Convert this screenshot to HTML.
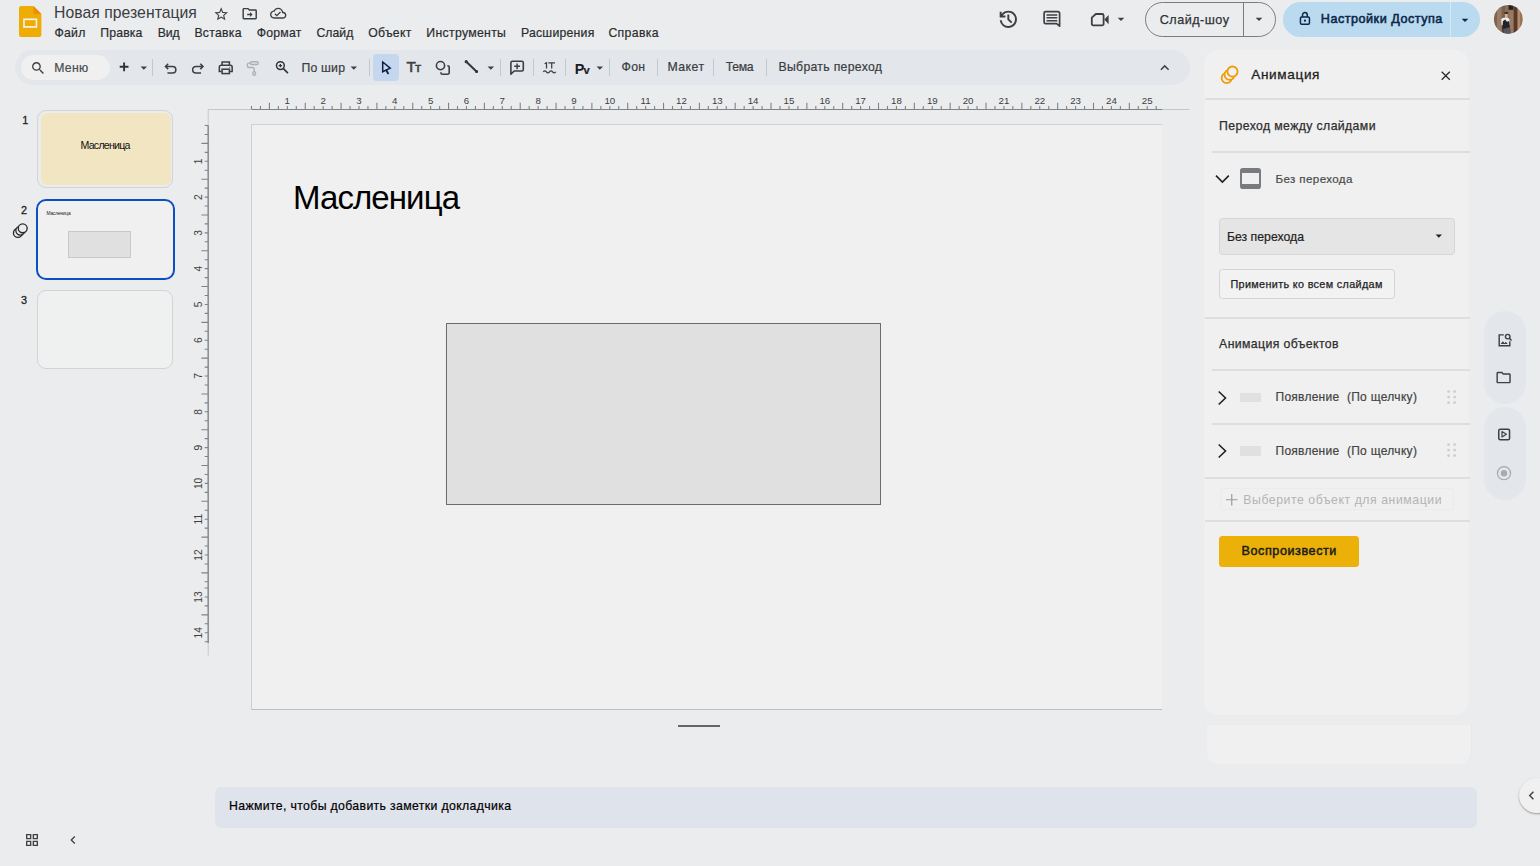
<!DOCTYPE html>
<html lang="ru">
<head>
<meta charset="utf-8">
<title>Новая презентация</title>
<style>
html,body{margin:0;padding:0}
body{width:1540px;height:866px;overflow:hidden;background:#ebecee;position:relative;font-family:"Liberation Sans",sans-serif;}
.a{position:absolute}
.t{position:absolute;white-space:pre;line-height:1;margin:0;padding:0}
svg{position:absolute;overflow:visible}
.sep{position:absolute;width:1px;background:#c4c7cc;top:59px;height:17px}
.hl{position:absolute;height:2px;background:#dedede}
#toolbar{left:15px;top:50px;width:1175px;height:35px;border-radius:18px;background:#e3e6eb}
#search{left:21px;top:55px;width:89px;height:25px;border-radius:13px;background:#f0f0f0}
#selbtn{left:373.100px;top:54.400px;width:26.400px;height:26.600px;border-radius:4px;background:#c5d6ef}
#panel{left:1204.400px;top:50px;width:265.100px;height:664.600px;border-radius:14px;background:#f0f0f0}
#panel2{left:1206.600px;top:725px;width:264.400px;height:39px;border-radius:0 0 12px 12px;background:#f0f0f0;border-right:1px solid #e6e9ec}
#slide{left:251px;top:124px;height:583.700px;background:#f0f0f0;border:1px solid #cfd0d0;border-right:0;border-bottom-color:#bcbebe;width:909.800px}
#shape{left:446px;top:323px;width:433px;height:180px;background:#e0e0e0;border:1px solid #6c6c6c}
#notes{left:215px;top:786.500px;width:1262px;height:41.700px;border-radius:6px;background:#dfe3ec}
.rail{left:1484px;width:42px;height:93px;border-radius:21px;background:#e3e6eb}
</style>
</head>
<body>
<!-- header -->
<svg style="left:18.600px;top:5.800px" width="22.400" height="31" viewBox="0 0 22.6 31" preserveAspectRatio="none">
<path d="M2.2 0H14.6L22.6 8V28.8a2.2 2.2 0 0 1-2.2 2.2H2.200A2.200 2.200 0 0 1 0 28.800V2.200A2.200 2.200 0 0 1 2.200 0z" fill="#efac05"/>
<path d="M14.6 0L22.6 8H16.2a1.600 1.600 0 0 1-1.600-1.600z" fill="#e98f07"/>
<rect x="5" y="13.3" width="12.6" height="7.6" fill="none" stroke="#f3f1ea" stroke-width="1.7"/>
</svg>
<svg style="left:212.80px;top:5.50px" width="16.4" height="16.4" viewBox="0 0 24 24"><path  fill="#3c4043" d="M22 9.24l-7.19-.62L12 2 9.19 8.63 2 9.24l5.46 4.73L5.82 21 12 17.27 18.18 21l-1.63-7.03L22 9.24zM12 15.4l-3.76 2.27 1-4.28-3.32-2.88 4.38-.38L12 6.1l1.71 4.04 4.38.38-3.32 2.88 1 4.28L12 15.4z"/></svg>
<svg style="left:240.70px;top:4.70px" width="17.4" height="17.4" viewBox="0 0 24 24"><path  fill="#3c4043" d="M20 6h-8l-2-2H4c-1.100 0-2 .9-2 2v12c0 1.100.9 2 2 2h16c1.100 0 2-.9 2-2V8c0-1.100-.9-2-2-2zm0 12H4V6h5.170l2 2H20v10zm-7.500-1.500l3.500-3.500-3.500-3.500v2.500H8.500v2h4v2.500z"/></svg>
<svg style="left:269.60px;top:5.20px" width="16.4" height="16.4" viewBox="0 0 24 24"><path  fill="#3c4043" d="M19.35 10.04C18.67 6.59 15.64 4 12 4 9.11 4 6.6 5.64 5.35 8.04 2.34 8.36 0 10.91 0 14c0 3.31 2.69 6 6 6h13c2.76 0 5-2.24 5-5 0-2.64-2.05-4.78-4.65-4.96zM19 18H6c-2.21 0-4-1.79-4-4 0-2.05 1.53-3.76 3.56-3.97l1.07-.11.5-.95C8.08 7.14 9.94 6 12 6c2.62 0 4.88 1.86 5.39 4.43l.3 1.5 1.53.11c1.56.1 2.78 1.41 2.78 2.96 0 1.65-1.35 3-3 3zm-9-3.82l-2.09-2.09L6.5 13.5 10 17l6.01-6.01-1.41-1.41z"/></svg>
<svg style="left:990px;top:4px" width="140" height="30" viewBox="990 4 140 30" fill="none" stroke="#3c4043" stroke-width="1.700">
<path transform="translate(996.800 7.800) scale(.96)" fill="#3c4043" stroke="none" d="M12 21q-3.450 0-6.012-2.287T3.050 13H5.100q.35 2.600 2.313 4.300T12 19q2.925 0 4.963-2.037T19 12t-2.037-4.963T12 5q-1.725 0-3.225.8T6.250 8H9v2H3V4h2v2.350q1.275-1.600 3.113-2.475T12 3q1.875 0 3.513.713t2.850 1.924 1.925 2.850T21 12t-.712 3.513-1.925 2.850-2.850 1.925T12 21m2.800-4.800L11 12.400V7h2v4.600l3.200 3.200z"/>
<path d="M1044.100 13.200a1.500 1.500 0 0 1 1.500-1.500h12.500a1.500 1.500 0 0 1 1.500 1.500v13l-3-2.500h-11a1.500 1.500 0 0 1-1.500-1.500z" stroke-linejoin="round"/><path d="M1046.500 14.900h10.800M1046.500 17.800h10.800M1046.500 20.800h10.800" stroke-width="1.500"/>
<path d="M1095.800 14h6.300a1.500 1.500 0 0 1 1.500 1.500v8.400a1.500 1.500 0 0 1-1.500 1.500h-8.800a1.500 1.500 0 0 1-1.500-1.500v-6.200z" stroke-width="1.800" stroke-linejoin="round"/><path d="M1104.300 19.600l4.300-4.700v9.400z" fill="#3c4043" stroke="none"/>
</svg>
<svg style="left:1113.00px;top:11.00px" width="16" height="16" viewBox="0 0 24 24"><path  fill="#3c4043" d="M7 10l5 5 5-5z"/></svg>
<div class="a" style="left:1144.5px;top:1.5px;width:129px;height:33px;border:1px solid #7a7d80;border-radius:18px"></div>
<div class="a" style="left:1243px;top:2px;width:1px;height:34px;background:#7a7d80"></div>
<svg style="left:1251.00px;top:11.00px" width="16" height="16" viewBox="0 0 24 24"><path  fill="#3c4043" d="M7 10l5 5 5-5z"/></svg>
<div class="a" style="left:1282.5px;top:1.5px;width:197px;height:35px;border-radius:18px;background:#badaf0"></div>
<div class="a" style="left:1450px;top:1.5px;width:1px;height:35px;background:#d6e8f5"></div>
<svg style="left:1296px;top:9px" width="18" height="18" viewBox="1296 9 18 18" fill="none" stroke="#0c2748" stroke-width="1.500"><rect x="1300.450" y="16.950" width="9" height="7.400" rx="1.300"/><path d="M1302.550 17V14.900a2.350 2.350 0 0 1 4.700 0V17"/><circle cx="1304.950" cy="20.700" r="1.150" fill="#0c2748" stroke="none"/></svg>
<svg style="left:1457.00px;top:11.60px" width="16" height="16" viewBox="0 0 24 24"><path  fill="#0c2748" d="M7 10l5 5 5-5z"/></svg>
<svg style="left:1493px;top:4px" width="31" height="31" viewBox="-1 -.5 31 31"><defs><clipPath id="av"><circle cx="14.300" cy="14.800" r="14.400"/></clipPath><filter id="bl" x="-10%" y="-10%" width="120%" height="120%"><feGaussianBlur stdDeviation=".55"/></filter></defs>
<circle cx="14.300" cy="14.800" r="15" fill="#f3f3f4"/>
<g clip-path="url(#av)"><g filter="url(#bl)"><rect x="-2" y="-2" width="34" height="34" fill="#8d6e59"/>
<rect x="-2" y="-2" width="8" height="34" fill="#80624f"/><rect x="3" y="4" width="4" height="22" fill="#9b7d66"/><rect x="8" y="-2" width="3" height="34" fill="#7c5e4c"/><rect x="15.500" y="6" width="4" height="26" fill="#9a7a62"/>
<rect x="19.700" y="-2" width="3.900" height="34" fill="#5c392c"/><rect x="23.600" y="-2" width="3" height="34" fill="#b08f6c"/><rect x="26.300" y="-2" width="5" height="34" fill="#94704f"/>
<rect x="14.600" y="-2" width="4.600" height="7.300" fill="#25211f"/>
<rect x="10.900" y="8.800" width="2.700" height="5" fill="#d9b08d"/><ellipse cx="12.300" cy="8.500" rx="2.100" ry="1.100" fill="#2a2a2c"/>
<path d="M7.300 14.800q.3-1.600 2.500-1.600h3.400q1.800 0 2.100 1.600l.7 6h-8.500z" fill="#eeeef2"/>
<path d="M9 16.400l2.300-1.400 1.600 2.200 2.300-.7.900 7 .3 6.500h-7.600l-.5-7z" fill="#24242a"/><path d="M9.200 24.500l6.700-2 .5 6.300h-6.900z" fill="#58585c"/></g></g></svg>
<!-- toolbar -->
<div id="toolbar" class="a"></div>
<div id="search" class="a"></div>
<div id="selbtn" class="a"></div>
<svg style="left:30.15px;top:59.85px" width="16.3" height="16.3" viewBox="0 0 24 24"><path  fill="#3c4043" d="M15.5 14h-.79l-.28-.27C15.41 12.59 16 11.11 16 9.5 16 5.91 13.09 3 9.5 3S3 5.91 3 9.5 5.91 16 9.5 16c1.61 0 3.09-.59 4.23-1.57l.27.28v.79l5 4.99L20.49 19l-4.99-5zm-6 0C7.01 14 5 11.99 5 9.5S7.01 5 9.5 5 14 7.01 14 9.5 11.99 14 9.5 14z"/></svg>
<svg style="left:118px;top:61px" width="12" height="12" viewBox="118 61 12 12" stroke="#303336" stroke-width="1.900" fill="none"><path d="M124.100 62.400v8.800M119.700 66.800h8.800"/></svg>
<svg style="left:136.20px;top:59.60px" width="15.6" height="15.6" viewBox="0 0 24 24"><path  fill="#3c4043" d="M7 10l5 5 5-5z"/></svg>
<div class="sep" style="left:152.0px"></div>
<div class="sep" style="left:368.9px"></div>
<div class="sep" style="left:499.6px"></div>
<div class="sep" style="left:533.4px"></div>
<div class="sep" style="left:564.5px"></div>
<div class="sep" style="left:608.9px"></div>
<div class="sep" style="left:656.7px"></div>
<div class="sep" style="left:713.0px"></div>
<div class="sep" style="left:765.8px"></div>
<svg style="left:161.500px;top:58.750px" width="17.500" height="17.500" viewBox="0 0 24 24" fill="none" stroke="#3c4043" stroke-width="2.100"><path d="M8.500 6.500L4.800 10.200l3.700 3.700"/><path d="M5.200 10.200h9.300a4.500 4.500 0 0 1 0 9H7.500"/></svg>
<svg style="left:188.500px;top:58.750px" width="17.500" height="17.500" viewBox="0 0 24 24" fill="none" stroke="#3c4043" stroke-width="2.100"><path d="M15.500 6.500l3.700 3.700-3.700 3.700"/><path d="M18.800 10.200H9.500a4.500 4.500 0 0 0 0 9h7"/></svg>
<svg style="left:217.250px;top:59px" width="17.500" height="17.500" viewBox="0 0 24 24" fill="none" stroke="#3c4043" stroke-width="2.100"><path d="M7 8.500V4.200h10V8.500"/><path d="M6.500 17H3.200v-6a2.500 2.500 0 0 1 2.500-2.500h12.600a2.500 2.500 0 0 1 2.500 2.500v6H17.500"/><rect x="7" y="14" width="10" height="6"/><circle cx="17.500" cy="11.700" r=".7" fill="#3c4043" stroke="none"/></svg>
<svg style="left:244px;top:57px" width="48" height="22" viewBox="244 57 48 22" fill="none" stroke="#aeb0b4" stroke-width="1.400"><rect x="250.500" y="61.800" width="7.700" height="2.700" rx="1.300"/><path d="M250.500 63.100h-1.600a1.500 1.500 0 0 0-1.500 1.500v1.400a1.500 1.500 0 0 0 1.500 1.500h3.800a1.500 1.500 0 0 1 1.500 1.500v2"/><rect x="252.900" y="71.600" width="2.600" height="3.600" rx="1.300"/>
<g stroke="#33363a"><circle cx="280.400" cy="65.600" r="3.900" stroke-width="1.500"/><path d="M283.400 68.600l4.500 4.600" stroke-width="1.700"/><path d="M280.400 63.900v3.400M278.700 65.600h3.400" stroke-width="1.300"/></g></svg>
<svg style="left:346.20px;top:59.60px" width="15.6" height="15.6" viewBox="0 0 24 24"><path  fill="#3c4043" d="M7 10l5 5 5-5z"/></svg>
<svg style="left:376px;top:56px" width="22" height="22" viewBox="376 56 22 22" fill="none" stroke="#0b1f44" stroke-width="1.500"><path d="M382.700 62V71.800L390.200 68.200z" stroke-linejoin="miter"/><path d="M386 69.600l2.400 4.400" stroke-width="1.800"/></svg>
<svg style="left:432px;top:57px" width="22" height="22" viewBox="432 57 22 22" fill="none" stroke="#3c4043" stroke-width="1.600"><circle cx="440.500" cy="65.600" r="4.100"/><path d="M447.300 65.700h.4a1.500 1.500 0 0 1 1.500 1.500v5.500a1.500 1.500 0 0 1-1.500 1.500h-5.300a1.500 1.500 0 0 1-1.500-1.500v-.4"/></svg>
<svg style="left:462px;top:57px" width="20" height="20" viewBox="462 57 20 20" fill="none" stroke="#33363a" stroke-width="2" stroke-linecap="round"><path d="M466.300 61.800L476.500 71.400"/><circle cx="466.200" cy="61.700" r="1" fill="#33363a" stroke-width="1.200"/><circle cx="476.600" cy="71.500" r="1" fill="#33363a" stroke-width="1.200"/></svg>
<svg style="left:483.00px;top:59.60px" width="15.6" height="15.6" viewBox="0 0 24 24"><path  fill="#3c4043" d="M7 10l5 5 5-5z"/></svg>
<svg style="left:508px;top:58px" width="20" height="20" viewBox="508 58 20 20" fill="none" stroke="#3c4043" stroke-width="1.600"><path d="M510.900 74.300v-11.500a1.500 1.500 0 0 1 1.500-1.500h9.400a1.500 1.500 0 0 1 1.500 1.500v6.700a1.500 1.500 0 0 1-1.500 1.500h-7.700z" stroke-linejoin="round"/><path d="M517.100 63.400v5.800M514.200 66.300h5.800" stroke-width="1.500"/></svg>
<svg style="left:541px;top:58px" width="18" height="18" viewBox="541 58 18 18" fill="none" stroke="#3c4043" stroke-width="1.250"><path d="M544.600 63.700l1.900-1v5.700M548.400 62.900h6.600M551.700 62.900v5.500"/><path d="M543.300 71.800c1-1.300 2.100-1.300 3.100 0s2.100 1.300 3.100 0 2.100-1.300 3.100 0 2.100 1.300 3.100 0"/></svg>
<svg style="left:592.40px;top:59.60px" width="15.6" height="15.6" viewBox="0 0 24 24"><path  fill="#3c4043" d="M7 10l5 5 5-5z"/></svg>
<svg style="left:1156.45px;top:59.25px" width="17.5" height="17.5" viewBox="0 0 24 24"><path  fill="#3c4043" d="M12 8l-6 6 1.410 1.410L12 10.830l4.590 4.580L18 14z"/></svg>
<!-- filmstrip -->
<div class="a" style="left:37.200px;top:110px;width:134px;height:76.400px;border:1px solid #d2d3d5;border-radius:9px"></div>
<div class="a" style="left:40.500px;top:113.100px;width:130.100px;height:72.400px;border-radius:6.500px;background:#f1e5c2"></div>
<div class="a" style="left:36.200px;top:199.200px;width:134.600px;height:76.600px;border:2px solid #0b4fc4;border-radius:10px;background:#f0f0f0"></div>
<div class="a" style="left:68px;top:231.300px;width:60.800px;height:24.800px;border:.5px solid #c9c9c9;background:#e0e0e0"></div>
<div class="a" style="left:37.400px;top:290.200px;width:134px;height:76.400px;border:1px solid #d2d3d5;border-radius:9px;background:#eff0f0"></div>
<svg style="left:5px;top:215px" width="30" height="30" viewBox="5 215 30 30" fill="#ebecee" stroke="#26282b" stroke-width="1.350"><circle cx="17.900" cy="232.900" r="4.450"/><circle cx="20.300" cy="230.600" r="4.450"/><circle cx="22.700" cy="228.300" r="4.450"/></svg>
<svg style="left:24.00px;top:831.70px" width="16" height="16" viewBox="0 0 24 24"><path  fill="#3c4043" d="M3 3v8h8V3H3zm6 6H5V5h4v4zm-6 4v8h8v-8H3zm6 6H5v-4h4v4zm4-16v8h8V3h-8zm6 6h-4V5h4v4zm-6 4v8h8v-8h-8zm6 6h-4v-4h4v4z"/></svg>
<svg style="left:65.00px;top:831.70px" width="16" height="16" viewBox="0 0 24 24"><path  fill="#3c4043" d="M15.41 7.41L14 6l-6 6 6 6 1.410-1.410L10.830 12z"/></svg>
<!-- canvas -->
<div id="slide" class="a"></div>
<div id="shape" class="a"></div>
<div class="a" style="left:678px;top:725.300px;width:42px;height:1.800px;background:#63666a"></div>
<div id="notes" class="a"></div>
<svg style="left:0;top:0" width="1540" height="866" viewBox="0 0 1540 866"><path d="M208 109.500H252M1162 109.500H1189.500M208.200 109.500V126M208.200 643V655.600" stroke="#c6c7c9" stroke-width="1" fill="none"/><path d="M252 109.500H1162.300" stroke="#808285" stroke-width="1.200" fill="none"/><path d="M208.200 125.500V643" stroke="#8e9093" stroke-width="1.600" fill="none"/><path d="M251.50 106.0V109.5M260.46 106.0V109.5M269.42 102.7V109.5M278.37 106.0V109.5M287.33 106.0V109.5M296.29 106.0V109.5M305.25 102.7V109.5M314.20 106.0V109.5M323.16 106.0V109.5M332.12 106.0V109.5M341.07 102.7V109.5M350.03 106.0V109.5M358.99 106.0V109.5M367.95 106.0V109.5M376.90 102.7V109.5M385.86 106.0V109.5M394.82 106.0V109.5M403.78 106.0V109.5M412.74 102.7V109.5M421.69 106.0V109.5M430.65 106.0V109.5M439.61 106.0V109.5M448.56 102.7V109.5M457.52 106.0V109.5M466.48 106.0V109.5M475.44 106.0V109.5M484.39 102.7V109.5M493.35 106.0V109.5M502.31 106.0V109.5M511.27 106.0V109.5M520.22 102.7V109.5M529.18 106.0V109.5M538.14 106.0V109.5M547.10 106.0V109.5M556.06 102.7V109.5M565.01 106.0V109.5M573.97 106.0V109.5M582.93 106.0V109.5M591.88 102.7V109.5M600.84 106.0V109.5M609.80 106.0V109.5M618.76 106.0V109.5M627.71 102.7V109.5M636.67 106.0V109.5M645.63 106.0V109.5M654.59 106.0V109.5M663.54 102.7V109.5M672.50 106.0V109.5M681.46 106.0V109.5M690.42 106.0V109.5M699.38 102.7V109.5M708.33 106.0V109.5M717.29 106.0V109.5M726.25 106.0V109.5M735.20 102.7V109.5M744.16 106.0V109.5M753.12 106.0V109.5M762.08 106.0V109.5M771.03 102.7V109.5M779.99 106.0V109.5M788.95 106.0V109.5M797.91 106.0V109.5M806.87 102.7V109.5M815.82 106.0V109.5M824.78 106.0V109.5M833.74 106.0V109.5M842.69 102.7V109.5M851.65 106.0V109.5M860.61 106.0V109.5M869.57 106.0V109.5M878.52 102.7V109.5M887.48 106.0V109.5M896.44 106.0V109.5M905.40 106.0V109.5M914.36 102.7V109.5M923.31 106.0V109.5M932.27 106.0V109.5M941.23 106.0V109.5M950.18 102.7V109.5M959.14 106.0V109.5M968.10 106.0V109.5M977.06 106.0V109.5M986.01 102.7V109.5M994.97 106.0V109.5M1003.93 106.0V109.5M1012.89 106.0V109.5M1021.84 102.7V109.5M1030.80 106.0V109.5M1039.76 106.0V109.5M1048.72 106.0V109.5M1057.67 102.7V109.5M1066.63 106.0V109.5M1075.59 106.0V109.5M1084.55 106.0V109.5M1093.51 102.7V109.5M1102.46 106.0V109.5M1111.42 106.0V109.5M1120.38 106.0V109.5M1129.34 102.7V109.5M1138.29 106.0V109.5M1147.25 106.0V109.5M1156.21 106.0V109.5" stroke="#808285" stroke-width="1.100" fill="none"/><path d="M204.7 125.50H208.2M204.7 134.45H208.2M201.4 143.40H208.2M204.7 152.34H208.2M204.7 161.29H208.2M204.7 170.24H208.2M201.4 179.19H208.2M204.7 188.13H208.2M204.7 197.08H208.2M204.7 206.03H208.2M201.4 214.97H208.2M204.7 223.92H208.2M204.7 232.87H208.2M204.7 241.82H208.2M201.4 250.76H208.2M204.7 259.71H208.2M204.7 268.66H208.2M204.7 277.61H208.2M201.4 286.56H208.2M204.7 295.50H208.2M204.7 304.45H208.2M204.7 313.40H208.2M201.4 322.35H208.2M204.7 331.29H208.2M204.7 340.24H208.2M204.7 349.19H208.2M201.4 358.13H208.2M204.7 367.08H208.2M204.7 376.03H208.2M204.7 384.98H208.2M201.4 393.93H208.2M204.7 402.87H208.2M204.7 411.82H208.2M204.7 420.77H208.2M201.4 429.71H208.2M204.7 438.66H208.2M204.7 447.61H208.2M204.7 456.56H208.2M201.4 465.50H208.2M204.7 474.45H208.2M204.7 483.40H208.2M204.7 492.35H208.2M201.4 501.30H208.2M204.7 510.24H208.2M204.7 519.19H208.2M204.7 528.14H208.2M201.4 537.09H208.2M204.7 546.03H208.2M204.7 554.98H208.2M204.7 563.93H208.2M201.4 572.88H208.2M204.7 581.82H208.2M204.7 596.97H208.2M204.7 605.92H208.2M201.4 614.87H208.2M204.7 623.81H208.2M204.7 632.76H208.2M204.7 641.71H208.2M204.700 588H208.200" stroke="#808285" stroke-width="1.100" fill="none"/><g font-family="'Liberation Sans',sans-serif" font-size="10.200" fill="#3c4043" text-anchor="middle"><g font-size="9.700"><text x="287.3" y="103.900">1</text><text x="323.2" y="103.900">2</text><text x="359.0" y="103.900">3</text><text x="394.8" y="103.900">4</text><text x="430.6" y="103.900">5</text><text x="466.5" y="103.900">6</text><text x="502.3" y="103.900">7</text><text x="538.1" y="103.900">8</text><text x="574.0" y="103.900">9</text><text x="609.8" y="103.900">10</text><text x="645.6" y="103.900">11</text><text x="681.5" y="103.900">12</text><text x="717.3" y="103.900">13</text><text x="753.1" y="103.900">14</text><text x="788.9" y="103.900">15</text><text x="824.8" y="103.900">16</text><text x="860.6" y="103.900">17</text><text x="896.4" y="103.900">18</text><text x="932.3" y="103.900">19</text><text x="968.1" y="103.900">20</text><text x="1003.9" y="103.900">21</text><text x="1039.8" y="103.900">22</text><text x="1075.6" y="103.900">23</text><text x="1111.4" y="103.900">24</text><text x="1147.2" y="103.900">25</text></g><text transform="translate(202.400 161.3) rotate(-90)">1</text><text transform="translate(202.400 197.1) rotate(-90)">2</text><text transform="translate(202.400 232.9) rotate(-90)">3</text><text transform="translate(202.400 268.7) rotate(-90)">4</text><text transform="translate(202.400 304.4) rotate(-90)">5</text><text transform="translate(202.400 340.2) rotate(-90)">6</text><text transform="translate(202.400 376.0) rotate(-90)">7</text><text transform="translate(202.400 411.8) rotate(-90)">8</text><text transform="translate(202.400 447.6) rotate(-90)">9</text><text transform="translate(202.400 483.4) rotate(-90)">10</text><text transform="translate(202.400 519.2) rotate(-90)">11</text><text transform="translate(202.400 555.0) rotate(-90)">12</text><text transform="translate(202.400 597.0) rotate(-90)">13</text><text transform="translate(202.400 632.8) rotate(-90)">14</text></g></svg>
<!-- side panel -->
<div id="panel" class="a"></div>
<div id="panel2" class="a"></div>
<div class="hl" style="left:1205px;top:98.3px;width:264.5px"></div>
<div class="hl" style="left:1212px;top:151px;width:257.5px"></div>
<div class="hl" style="left:1205px;top:317.3px;width:264.5px"></div>
<div class="hl" style="left:1212px;top:369.2px;width:257.5px"></div>
<div class="hl" style="left:1212px;top:422.8px;width:257.5px"></div>
<div class="hl" style="left:1205px;top:476.5px;width:264.5px"></div>
<div class="hl" style="left:1205px;top:519.7px;width:264.5px"></div>
<svg style="left:1214px;top:60px" width="30" height="30" viewBox="1214 60 30 30" fill="#f0f0f0" stroke="#f09c06" stroke-width="1.800"><circle cx="1226.700" cy="78" r="5.100"/><circle cx="1229.600" cy="74.800" r="5.100"/><circle cx="1232.500" cy="71.600" r="5.100"/></svg>
<svg style="left:1437.75px;top:67.75px" width="15.5" height="15.5" viewBox="0 0 24 24"><path  fill="#2a2a2a" d="M19 6.41L17.59 5 12 10.59 6.41 5 5 6.41 10.59 12 5 17.59 6.41 19 12 13.41 17.59 19 19 17.590 13.41 12z"/></svg>
<svg style="left:1215px;top:171px" width="16" height="16" viewBox="0 0 16 16" fill="none" stroke="#222" stroke-width="1.600"><path d="M1 4.600L7.400 11.100l6.400-6.500"/></svg>
<svg style="left:1214px;top:389.5px" width="16" height="16" viewBox="0 0 16 16" fill="none" stroke="#222" stroke-width="1.600"><path d="M4.700 1.500L11.500 8l-6.800 6.500"/></svg>
<div class="a" style="left:1240px;top:392.9px;width:21px;height:9.600px;background:#e0e0e0"></div>
<svg style="left:1447px;top:390.2px" width="10" height="15" viewBox="0 0 10 15" fill="#cecece"><circle cx="1.6" cy="1.6" r="1.450"/><circle cx="1.6" cy="7.1" r="1.450"/><circle cx="1.6" cy="12.6" r="1.450"/><circle cx="7.6" cy="1.6" r="1.450"/><circle cx="7.6" cy="7.1" r="1.450"/><circle cx="7.6" cy="12.6" r="1.450"/></svg>
<svg style="left:1214px;top:442.7px" width="16" height="16" viewBox="0 0 16 16" fill="none" stroke="#222" stroke-width="1.600"><path d="M4.700 1.500L11.500 8l-6.800 6.500"/></svg>
<div class="a" style="left:1240px;top:446.09999999999997px;width:21px;height:9.600px;background:#e0e0e0"></div>
<svg style="left:1447px;top:443.4px" width="10" height="15" viewBox="0 0 10 15" fill="#cecece"><circle cx="1.6" cy="1.6" r="1.450"/><circle cx="1.6" cy="7.1" r="1.450"/><circle cx="1.6" cy="12.6" r="1.450"/><circle cx="7.6" cy="1.6" r="1.450"/><circle cx="7.6" cy="7.1" r="1.450"/><circle cx="7.6" cy="12.6" r="1.450"/></svg>
<div class="a" style="left:1240.100px;top:168.100px;width:16.800px;height:10.800px;border:2px solid #787b80;border-top-width:5.400px;border-bottom-width:5px;border-radius:2.800px;background:#f0f0f0"></div>
<div class="a" style="left:1219px;top:218px;width:233.500px;height:34.500px;border:1px solid #d6d6d6;border-radius:3.500px;background:#e5e5e5"></div>
<svg style="left:1430.60px;top:228.20px" width="15.6" height="15.6" viewBox="0 0 24 24"><path  fill="#222" d="M7 10l5 5 5-5z"/></svg>
<div class="a" style="left:1219px;top:268.700px;width:173.500px;height:28.800px;border:1px solid #d4d4d4;border-radius:3.500px;background:#f2f2f2"></div>
<div class="a" style="left:1219.500px;top:488.300px;width:232.500px;height:20px;border:1px solid #ebebeb;border-radius:3px"></div>
<svg style="left:1225.500px;top:494px" width="11.500" height="11.500" viewBox="0 0 11.500 11.500" stroke="#9b9b9b" stroke-width="1.200"><path d="M5.750 0V11.500M0 5.750H11.500"/></svg>
<div class="a" style="left:1219px;top:535.800px;width:139.700px;height:31px;border-radius:3.500px;background:#ecb108"></div>
<!-- rail -->
<div class="rail a" style="top:311.300px"></div>
<div class="rail a" style="top:406.500px"></div>
<svg style="left:1496px;top:331.500px" width="17" height="17" viewBox="0 0 24 24" fill="none" stroke="#3c4043" stroke-width="2"><path d="M11 4H4.500v15.500H19.500V13"/><circle cx="16.500" cy="6.500" r="3.200"/><path d="M19 9l3 3"/><path d="M6.500 17l3.200-4 2.300 2.800 1.700-2 2.800 3.200z" fill="#3c4043" stroke="none"/></svg>
<svg style="left:1495.45px;top:369.40px" width="17.2" height="17.2" viewBox="0 0 24 24"><path  fill="#3c4043" d="M9.17 6l2 2H20v10H4V6h5.17M10 4H4c-1.1 0-1.990.9-1.990 2L2 18c0 1.100.9 2 2 2h16c1.100 0 2-.9 2-2V8c0-1.100-.9-2-2-2h-8l-2-2z"/></svg>
<svg style="left:1494px;top:424px" width="20" height="60" viewBox="1494 424 20 60" fill="none" stroke="#3c4043" stroke-width="1.500"><rect x="1498.750" y="429.150" width="10.800" height="10.500" rx="1.500"/><path d="M1502 431.500v5.400l4.400-2.700z" stroke-width="1.200" stroke-linejoin="round"/><circle cx="1504" cy="473.200" r="6.550" stroke="#a4a6a9" stroke-width="1.200"/><circle cx="1504" cy="473.200" r="3.200" fill="#a8aaad" stroke="none"/></svg>
<div class="a" style="left:1519px;top:777.500px;width:36px;height:35px;border-radius:18px;background:#f0f0f0;box-shadow:0 1px 2px rgba(0,0,0,.35)"></div>
<svg style="left:1522.70px;top:786.80px" width="17" height="17" viewBox="0 0 24 24"><path  fill="#3c4043" d="M15.41 7.41L14 6l-6 6 6 6 1.410-1.410L10.830 12z"/></svg>
<!-- texts -->
<div class="t" style="left:54.1px;top:5px;font-size:15.75px;color:#3a3d41;letter-spacing:0.029px;">Новая презентация</div>
<div class="t" style="left:54.5px;top:27px;font-size:12.25px;color:#2a2c2f;letter-spacing:0.225px;-webkit-text-stroke:.2px #2a2c2f;">Файл</div>
<div class="t" style="left:100.3px;top:27px;font-size:12.25px;color:#2a2c2f;letter-spacing:0.142px;-webkit-text-stroke:.2px #2a2c2f;">Правка</div>
<div class="t" style="left:157.8px;top:27px;font-size:12.25px;color:#2a2c2f;letter-spacing:-0.186px;-webkit-text-stroke:.2px #2a2c2f;">Вид</div>
<div class="t" style="left:194.4px;top:27px;font-size:12.25px;color:#2a2c2f;letter-spacing:0.278px;-webkit-text-stroke:.2px #2a2c2f;">Вставка</div>
<div class="t" style="left:256.7px;top:27px;font-size:12.25px;color:#2a2c2f;letter-spacing:0.237px;-webkit-text-stroke:.2px #2a2c2f;">Формат</div>
<div class="t" style="left:316.4px;top:27px;font-size:12.25px;color:#2a2c2f;letter-spacing:0.047px;-webkit-text-stroke:.2px #2a2c2f;">Слайд</div>
<div class="t" style="left:368.3px;top:27px;font-size:12.25px;color:#2a2c2f;letter-spacing:0.256px;-webkit-text-stroke:.2px #2a2c2f;">Объект</div>
<div class="t" style="left:426.3px;top:27px;font-size:12.25px;color:#2a2c2f;letter-spacing:0.321px;-webkit-text-stroke:.2px #2a2c2f;">Инструменты</div>
<div class="t" style="left:520.9px;top:27px;font-size:12.25px;color:#2a2c2f;letter-spacing:0.239px;-webkit-text-stroke:.2px #2a2c2f;">Расширения</div>
<div class="t" style="left:608.4px;top:27px;font-size:12.25px;color:#2a2c2f;letter-spacing:0.373px;-webkit-text-stroke:.2px #2a2c2f;">Справка</div>
<div class="t" style="left:54.2px;top:62px;font-size:12.25px;color:#4a4d51;letter-spacing:0.297px;-webkit-text-stroke:.2px #4a4d51;">Меню</div>
<div class="t" style="left:301.4px;top:62px;font-size:12.25px;color:#3a3d41;letter-spacing:0.217px;-webkit-text-stroke:.2px #3a3d41;">По шир</div>
<div class="t" style="left:621.5px;top:61px;font-size:12.25px;color:#3a3d41;letter-spacing:0.347px;-webkit-text-stroke:.2px #3a3d41;">Фон</div>
<div class="t" style="left:667.5px;top:61px;font-size:12.25px;color:#3a3d41;letter-spacing:0.457px;-webkit-text-stroke:.2px #3a3d41;">Макет</div>
<div class="t" style="left:725.7px;top:61px;font-size:12.25px;color:#3a3d41;letter-spacing:-0.315px;-webkit-text-stroke:.2px #3a3d41;">Тема</div>
<div class="t" style="left:778.5px;top:61px;font-size:12.25px;color:#3a3d41;letter-spacing:0.305px;-webkit-text-stroke:.2px #3a3d41;">Выбрать переход</div>
<div class="t" style="left:406.5px;top:59px;font-size:15.3px;color:#3c4043;-webkit-text-stroke:.55px #3c4043;">T</div>
<div class="t" style="left:414.9px;top:61px;font-size:13.4px;color:#3c4043;-webkit-text-stroke:.55px #3c4043;">т</div>
<div class="t" style="left:574.8px;top:62px;font-size:14.4px;color:#1c1c1c;font-weight:700;">P</div>
<div class="t" style="left:583.6px;top:65px;font-size:11.2px;color:#1c1c1c;font-weight:700;-webkit-text-stroke:.2px #1c1c1c;">v</div>
<div class="t" style="left:1159.7px;top:14px;font-size:12.6px;color:#2f3235;letter-spacing:0.500px;-webkit-text-stroke:.25px #2f3235;">Слайд-шоу</div>
<div class="t" style="left:1320.8px;top:13px;font-size:12.6px;color:#0c2748;letter-spacing:0.515px;-webkit-text-stroke:.55px #0c2748;">Настройки Доступа</div>
<div class="t" style="left:1251.3px;top:68px;font-size:13.6px;color:#1f1f1f;letter-spacing:0.625px;-webkit-text-stroke:.3px #1f1f1f;">Анимация</div>
<div class="t" style="left:1219.1px;top:120px;font-size:12.25px;color:#2e2e2e;letter-spacing:0.391px;-webkit-text-stroke:.25px #2e2e2e;">Переход между слайдами</div>
<div class="t" style="left:1275.5px;top:173px;font-size:11.6px;color:#4a4a4a;letter-spacing:0.374px;-webkit-text-stroke:.2px #4a4a4a;">Без перехода</div>
<div class="t" style="left:1226.9px;top:231px;font-size:12.25px;color:#222;letter-spacing:0.018px;-webkit-text-stroke:.2px #222;">Без перехода</div>
<div class="t" style="left:1230.5px;top:279px;font-size:10.8px;color:#222;letter-spacing:0.348px;-webkit-text-stroke:.25px #222;">Применить ко всем слайдам</div>
<div class="t" style="left:1219.1px;top:338px;font-size:12.25px;color:#2e2e2e;letter-spacing:0.394px;-webkit-text-stroke:.25px #2e2e2e;">Анимация объектов</div>
<div class="t" style="left:1275.5px;top:391px;font-size:12.0px;color:#444;letter-spacing:0.253px;-webkit-text-stroke:.2px #444;">Появление</div>
<div class="t" style="left:1346.9px;top:391px;font-size:12.0px;color:#444;letter-spacing:0.298px;-webkit-text-stroke:.2px #444;">(По щелчку)</div>
<div class="t" style="left:1275.5px;top:445px;font-size:12.0px;color:#444;letter-spacing:0.253px;-webkit-text-stroke:.2px #444;">Появление</div>
<div class="t" style="left:1346.9px;top:445px;font-size:12.0px;color:#444;letter-spacing:0.298px;-webkit-text-stroke:.2px #444;">(По щелчку)</div>
<div class="t" style="left:1243.3px;top:494px;font-size:12.25px;color:#b4b4b4;letter-spacing:0.559px;">Выберите объект для анимации</div>
<div class="t" style="left:1241.5px;top:545px;font-size:12.6px;color:#1c1c1c;letter-spacing:0.575px;-webkit-text-stroke:.5px #1c1c1c;">Воспроизвести</div>
<div class="t" style="left:229.0px;top:800px;font-size:12.25px;color:#000;letter-spacing:0.364px;-webkit-text-stroke:.2px #000;">Нажмите, чтобы добавить заметки докладчика</div>
<div class="t" style="left:293.0px;top:181px;font-size:33px;color:#000;letter-spacing:-0.904px;">Масленица</div>
<div class="t" style="left:22.2px;top:115px;font-size:10.8px;color:#222;-webkit-text-stroke:.3px #222;">1</div>
<div class="t" style="left:21.1px;top:205px;font-size:10.8px;color:#222;-webkit-text-stroke:.3px #222;">2</div>
<div class="t" style="left:21.1px;top:295px;font-size:10.8px;color:#222;-webkit-text-stroke:.3px #222;">3</div>
<div class="t" style="left:80.5px;top:140px;font-size:10.6px;color:#111;letter-spacing:-0.742px;">Масленица</div>
<div class="t" style="left:46.5px;top:212px;font-size:4.8px;color:#222;letter-spacing:-0.154px;">Масленица</div>
</body>
</html>
